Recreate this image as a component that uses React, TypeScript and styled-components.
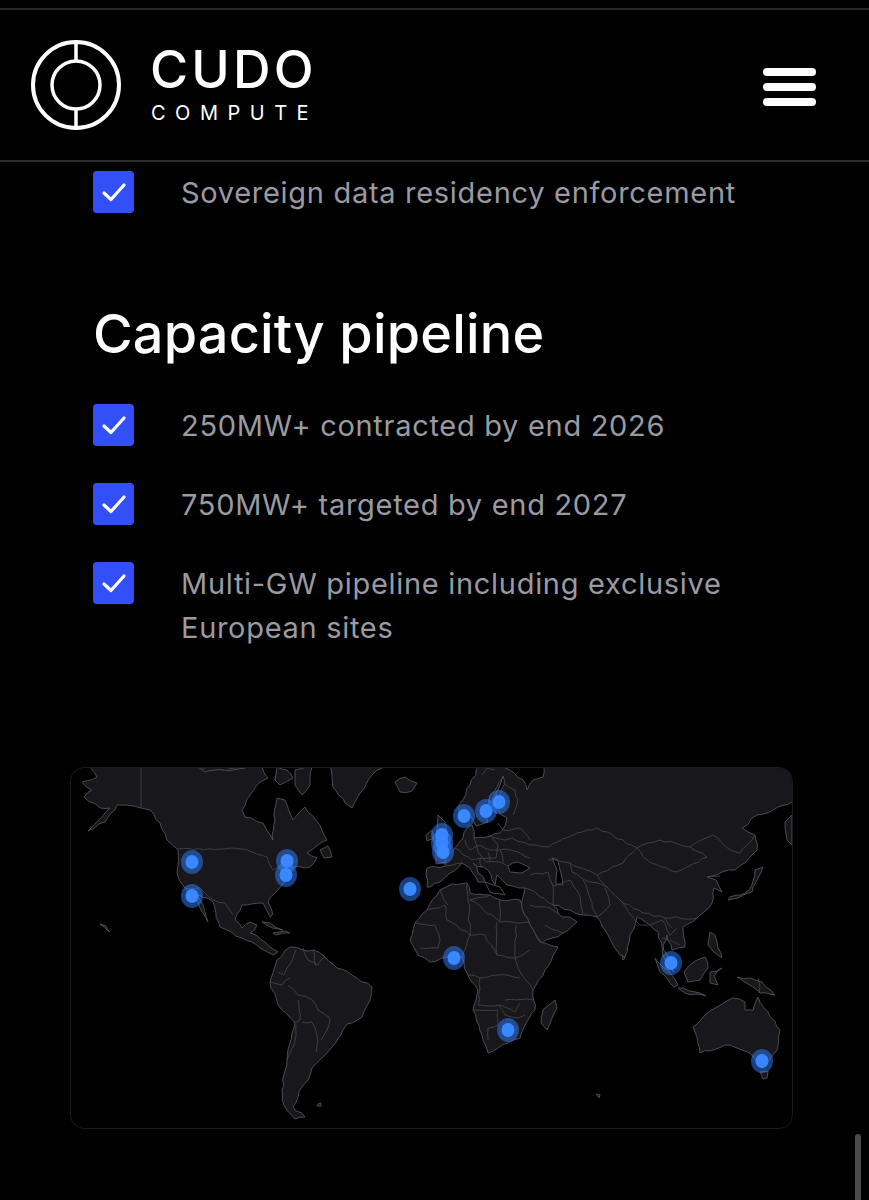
import React from "react";
import styled, { createGlobalStyle } from "styled-components";

const GlobalStyle = createGlobalStyle`
  html, body {
    margin: 0;
    padding: 0;
    background: #000;
  }
  body {
    font-family: Inter, "Liberation Sans", sans-serif;
    overflow: hidden;
  }
`;

const Page = styled.div`
  position: relative;
  width: 869px;
  height: 1200px;
  overflow: hidden;
  background: #000;
  padding-top: 8px;
  box-sizing: border-box;
`;

const Header = styled.header`
  height: 154px;
  box-sizing: border-box;
  border-top: 2px solid #26262a;
  border-bottom: 2px solid #2a2a2e;
  padding: 0 53px 0 31px;
  display: flex;
  align-items: center;
  justify-content: space-between;
`;

const Brand = styled.div`
  display: flex;
  align-items: center;
  gap: 30px;
`;

const BrandText = styled.div`
  display: flex;
  flex-direction: column;
  color: #fff;
  padding-bottom: 3px;
`;

const BrandName = styled.span`
  font-size: 52px;
  line-height: 50px;
  font-weight: 500;
  letter-spacing: 3.2px;
  margin-left: -1px;
`;

const BrandSub = styled.span`
  margin-top: 8px;
  font-size: 20px;
  line-height: 20px;
  font-weight: 400;
  letter-spacing: 9.5px;
`;

const Burger = styled.div`
  display: flex;
  flex-direction: column;
  gap: 7px;
  width: 53px;
  margin-top: 3px;
`;

const BurgerBar = styled.span`
  display: block;
  height: 8px;
  border-radius: 4px;
  background: #fff;
`;

const Content = styled.main`
  padding: 9px 0 0 93px;
`;

const CheckList = styled.ul`
  list-style: none;
  margin: 0;
  padding: 0;
  display: flex;
  flex-direction: column;
  gap: 36px;
`;

const CheckRow = styled.li`
  display: flex;
  align-items: flex-start;
  gap: 47px;
`;

const CheckBox = styled.span`
  flex: none;
  width: 41px;
  height: 42px;
  border-radius: 4px;
  background: #3350f8;
  display: flex;
  align-items: center;
  justify-content: center;
`;

const CheckText = styled.span`
  width: 590px;
  color: #9a9aa2;
  font-size: 29px;
  line-height: 44px;
  letter-spacing: 0.7px;
  margin-bottom: -1px;
`;

const Title = styled.h2`
  margin: 88px 0 38px;
  color: #fff;
  font-size: 54px;
  line-height: 64px;
  font-weight: 500;
  letter-spacing: 0.2px;
`;

const MapCard = styled.section`
  margin: 118px 0 0 70px;
  width: 723px;
  height: 362px;
  box-sizing: border-box;
  border: 1px solid #1b1b1f;
  border-radius: 14px;
  overflow: hidden;
`;

const MapSvg = styled.svg`
  display: block;
  width: 721px;
  height: 360px;
`;

const ScrollThumb = styled.div`
  position: absolute;
  right: 8px;
  bottom: 0;
  width: 6px;
  height: 66px;
  border-radius: 3px 3px 0 0;
  background: #4c4c4c;
`;

function Tick() {
  return (
    <svg width="26" height="22" viewBox="0 0 26 22" fill="none">
      <path d="M3 12 L10 18.5 L23 4" stroke="#fff" strokeWidth="3.2" strokeLinecap="round" strokeLinejoin="round" />
    </svg>
  );
}

function Check({ children }: { children: React.ReactNode }) {
  return (
    <CheckRow>
      <CheckBox>
        <Tick />
      </CheckBox>
      <CheckText>{children}</CheckText>
    </CheckRow>
  );
}

// land masses, in page pixels (see the viewBox)
const land = [
  // north america
  "M85 760 L97 777 L82 782 L92 790 L84 797 L100 808 L110 808 L88 831 L105 822 L117 805 L127 805 L141 808 L150 810 L160 823 L167 840 L178 850 L177 873 L185 888 L198 903 L208 922 L203 905 L197 894 L213 902 L220 927 L242 938 L252 942 L260 948 L273 955 L278 952 L266 943 L256 935 L250 933 L257 925 L250 922 L242 928 L235 920 L242 905 L263 903 L270 917 L273 914 L268 902 L282 885 L293 867 L310 867 L317 858 L307 853 L327 840 L322 830 L305 807 L293 820 L285 800 L277 798 L274 815 L273 840 L263 823 L245 817 L242 810 L250 795 L260 782 L268 778 L262 767 L262 760 Z",
  // greenland
  "M330 760 L333 787 L345 803 L352 808 L360 793 L372 775 L390 760 Z",
  // iceland
  "M395 782 L405 777 L417 783 L412 791 L400 792 Z",
  // newfoundland
  "M320 850 L328 846 L332 857 L324 858 Z",
  // south america
  "M277 960 L290 947 L303 950 L313 950 L325 957 L337 968 L352 975 L372 987 L370 1000 L362 1017 L347 1024 L343 1030 L332 1047 L327 1053 L312 1068 L308 1080 L299 1092 L293 1107 L305 1117 L295 1119 L284 1105 L282 1090 L287 1060 L295 1023 L278 1005 L270 982 Z",
  // africa
  "M410 940 L415 923 L427 910 L440 890 L452 884 L467 883 L470 893 L490 895 L500 900 L520 900 L530 920 L540 942 L558 947 L545 970 L533 990 L535 1010 L525 1025 L520 1038 L508 1043 L488 1053 L482 1035 L473 1010 L478 990 L467 973 L462 957 L447 957 L430 962 L418 955 Z",
  // eurasia
  "M427 887 L427 868 L445 866 L447 855 L455 848 L463 838 L467 828 L472 825 L474 838 L490 836 L500 833 L505 826 L507 818 L500 814 L497 808 L492 800 L500 785 L503 778 L490 795 L485 815 L488 822 L476 826 L470 815 L462 820 L458 808 L470 785 L482 760 L498 767 L510 770 L523 780 L527 790 L533 780 L543 777 L545 760 L800 760 L800 802 L792 802 L773 810 L757 815 L742 828 L755 835 L757 850 L750 857 L735 870 L722 872 L707 877 L716 880 L722 892 L714 888 L712 903 L697 918 L683 927 L685 947 L672 950 L667 935 L663 945 L668 960 L674 972 L665 960 L658 932 L650 925 L637 917 L630 935 L625 957 L620 955 L613 945 L605 930 L597 917 L583 915 L570 910 L553 905 L562 917 L570 917 L577 922 L563 933 L542 943 L530 925 L522 908 L525 888 L507 885 L497 875 L495 885 L488 870 L473 863 L485 882 L478 882 L470 868 L462 863 L450 873 L440 882 L430 887 Z",
  // great britain, ireland
  "M438 815 L445 822 L447 845 L445 862 L436 864 L434 845 L437 830 Z",
  "M432 830 L434 838 L427 841 L426 835 Z",
  // madagascar
  "M555 1000 L557 1008 L547 1030 L541 1023 L543 1010 Z",
  // australia
  "M693 1027 L705 1015 L717 1007 L733 998 L745 1002 L745 1010 L753 1010 L758 997 L768 1012 L780 1030 L777 1050 L763 1068 L750 1053 L742 1050 L730 1045 L700 1053 L697 1037 Z",
  "M760 1072 L768 1071 L767 1078 L763 1079 Z",
  // sumatra, java, borneo, sulawesi, new guinea
  "M655 958 L668 970 L678 985 L674 987 L660 972 Z",
  "M678 988 L700 993 L706 996 L685 993 Z",
  "M684 972 L697 960 L705 957 L708 968 L700 980 L688 982 Z",
  "M710 972 L722 968 L714 976 L718 985 L710 983 Z",
  "M737 977 L750 978 L762 982 L775 995 L760 993 L748 984 Z",
  // philippines
  "M710 932 L715 935 L718 948 L722 958 L714 952 L708 945 Z",
  // japan
  "M728 900 L730 897 L745 893 L752 885 L755 870 L763 867 L758 878 L752 892 L738 898 Z",
  // kamchatka
  "M792 815 L785 822 L787 840 L792 845 Z",
  // small islands
  "M622 955 L625 958 L623 960 Z",
  "M262 922 L270 923 L283 930 L272 928 Z",
  "M273 933 L285 931 L290 933 L276 935 Z",
  "M596 1094 L600 1095 L599 1098 Z",
  // hawaii
  "M100 924 L106 926 L108 930 L110 932 L108 931 L104 927 Z",
  // arctic islands
  "M277 767 L287 770 L293 778 L280 785 L275 780 Z",
  "M295 770 L312 767 L310 785 L302 795 L295 785 Z",
  "M198 767 L225 767 L245 768 L205 772 Z",
  "M318 1104 L321 1103 L321 1106 L317 1106 Z",
];

// inland seas cut back to black
const water = [
  "M508 866 L518 862 L530 868 L522 873 L510 872 Z",
  "M552 858 L558 860 L561 873 L563 885 L556 884 L557 870 Z",
  "M500 785 L503 776 L505 783 L497 800 L495 798 Z",
  "M485 882 L500 887 L505 895 L490 892 Z",
];

// country borders
const borders = [
  "M141 760 L141 808",
  "M178 849 L240 849 L252 852 L267 857 L273 870 L293 857",
  "M185 888 L200 888 L213 900 L225 903 L233 915",
  "M278 972 L284 975 L287 968 L296 950",
  "M270 982 L282 985 L290 978",
  "M288 985 L298 995 L312 1000 L318 1010 L330 1018 L327 1030 L321 1040",
  "M295 1023 L300 1020 L298 1000",
  "M302 1022 L312 1022 L318 1040 L316 1052",
  "M287 1060 L294 1045 L296 1025",
  "M303 948 L308 960 L318 965 L325 957",
  "M313 950 L316 966",
  "M415 923 L435 925 L440 940 L438 948 L420 948",
  "M427 910 L445 905 L447 920 L470 935 L485 935",
  "M440 890 L448 905",
  "M467 883 L468 900 L470 935",
  "M490 895 L470 900",
  "M470 900 L500 922 L500 900",
  "M500 922 L530 922",
  "M485 935 L497 955 L515 958 L530 950",
  "M497 922 L497 955",
  "M470 935 L462 957",
  "M516 925 L515 958 L522 975 L533 990",
  "M468 975 L480 978 L497 975 L520 978",
  "M480 978 L478 1005 L500 1005 L515 1012 L520 1003",
  "M474 1010 L498 1010 L498 1025 L488 1028 L488 1040",
  "M498 1005 L505 1015 L518 1018 L525 1015",
  "M505 1000 L533 1000",
  "M455 848 L472 860 L480 858 L496 858 L498 845 L492 838",
  "M465 840 L470 850 L480 845 L490 850 L510 850 L530 858",
  "M474 838 L478 852 L486 862 L500 862 L508 866",
  "M490 836 L505 840 L512 838 L530 845 L548 847",
  "M498 823 L503 830 L520 828 L530 840",
  "M445 866 L462 863",
  "M480 858 L482 868",
  "M488 852 L490 862",
  "M500 850 L503 862",
  "M500 780 L515 790 L518 800 L513 815",
  "M482 775 L487 768 L495 770",
  "M548 847 L577 833 L597 828 L637 848 L660 840 L690 847 L713 835 L730 850 L740 853 L755 835",
  "M637 848 L647 860 L675 872 L707 857 L690 847",
  "M637 848 L623 863 L597 875 L607 887 L620 900 L643 913 L665 918 L697 918",
  "M548 860 L570 863 L597 875",
  "M570 863 L572 872 L590 882 L607 887",
  "M553 886 L570 880 L578 892 L583 915",
  "M583 880 L590 898 L597 917",
  "M605 888 L610 905 L597 917",
  "M530 875 L548 872 L553 886 L553 905",
  "M525 888 L535 892 L553 905",
  "M530 905 L550 908 L562 917",
  "M545 925 L563 933",
  "M620 900 L640 925 L650 925",
  "M650 925 L662 920 L670 935 L677 928",
  "M662 938 L680 945",
  "M665 918 L672 928",
  "M707 877 L720 876",
  "M758 978 L759 993",
];

// breaks long straight runs into short jagged ones, coastlines are never straight
function roughen(d: string) {
  const pts = d.match(/-?\d+(\.\d+)?/g)!.map(Number);
  const closed = d.trim().endsWith("Z");
  let out = `M${pts[0]} ${pts[1]}`;
  let seed = pts[0] * 7 + pts[1] * 13;
  for (let i = 2; i < pts.length; i += 2) {
    const [x0, y0, x1, y1] = [pts[i - 2], pts[i - 1], pts[i], pts[i + 1]];
    const len = Math.hypot(x1 - x0, y1 - y0);
    const steps = Math.floor(len / 5);
    for (let s = 1; s < steps; s++) {
      seed = (seed * 31 + 17) % 101;
      const off = (seed / 100 - 0.5) * 2.4;
      const t = s / steps;
      const px = x0 + (x1 - x0) * t - ((y1 - y0) / len) * off;
      const py = y0 + (y1 - y0) * t + ((x1 - x0) / len) * off;
      out += ` L${px.toFixed(1)} ${py.toFixed(1)}`;
    }
    out += ` L${x1} ${y1}`;
  }
  return closed ? out + " Z" : out;
}

const sites = [
  [192, 862], [192, 896], [287, 861], [286, 875], [410, 889],
  [442, 835], [442, 843], [443, 852], [464, 816], [486, 811],
  [499, 802], [454, 958], [671, 963], [508, 1030], [762, 1061],
];

function WorldMap() {
  return (
    <MapSvg viewBox="71 768 721 360">
      <g fill="#17171c" stroke="#4c4c52" strokeWidth="1" strokeLinejoin="round">
        {land.map((d, i) => (
          <path key={i} d={roughen(d)} />
        ))}
      </g>
      <g fill="#000" stroke="#4c4c52" strokeWidth="1" strokeLinejoin="round">
        {water.map((d, i) => (
          <path key={i} d={roughen(d)} />
        ))}
      </g>
      <g fill="none" stroke="#434349" strokeWidth="0.9" strokeLinejoin="round">
        {borders.map((d, i) => (
          <path key={i} d={i < 1 ? d : roughen(d)} />
        ))}
      </g>
      {sites.map(([x, y], i) => (
        <g key={i}>
          <ellipse cx={x} cy={y} rx="11" ry="12" fill="#3280ff" fillOpacity="0.5" />
          <ellipse cx={x} cy={y} rx="6.5" ry="7" fill="#3a88ff" />
        </g>
      ))}
    </MapSvg>
  );
}

export default function App() {
  return (
    <Page>
      <GlobalStyle />
      <Header>
        <Brand>
          <svg width="90" height="90" viewBox="0 0 90 90" fill="none">
            <circle cx="45" cy="45" r="43" stroke="#fff" strokeWidth="4" />
            <circle cx="45" cy="45" r="24" stroke="#fff" strokeWidth="3.5" />
            <path d="M45 3 V21 M45 69 V87" stroke="#fff" strokeWidth="3.5" />
          </svg>
          <BrandText>
            <BrandName>CUDO</BrandName>
            <BrandSub>COMPUTE</BrandSub>
          </BrandText>
        </Brand>
        <Burger>
          <BurgerBar />
          <BurgerBar />
          <BurgerBar />
        </Burger>
      </Header>
      <Content>
        <CheckList>
          <Check>Sovereign data residency enforcement</Check>
        </CheckList>
        <Title>Capacity pipeline</Title>
        <CheckList>
          <Check>250MW+ contracted by end 2026</Check>
          <Check>750MW+ targeted by end 2027</Check>
          <Check>
            Multi-GW pipeline including exclusive
            <br />
            European sites
          </Check>
        </CheckList>
      </Content>
      <MapCard>
        <WorldMap />
      </MapCard>
      <ScrollThumb />
    </Page>
  );
}
